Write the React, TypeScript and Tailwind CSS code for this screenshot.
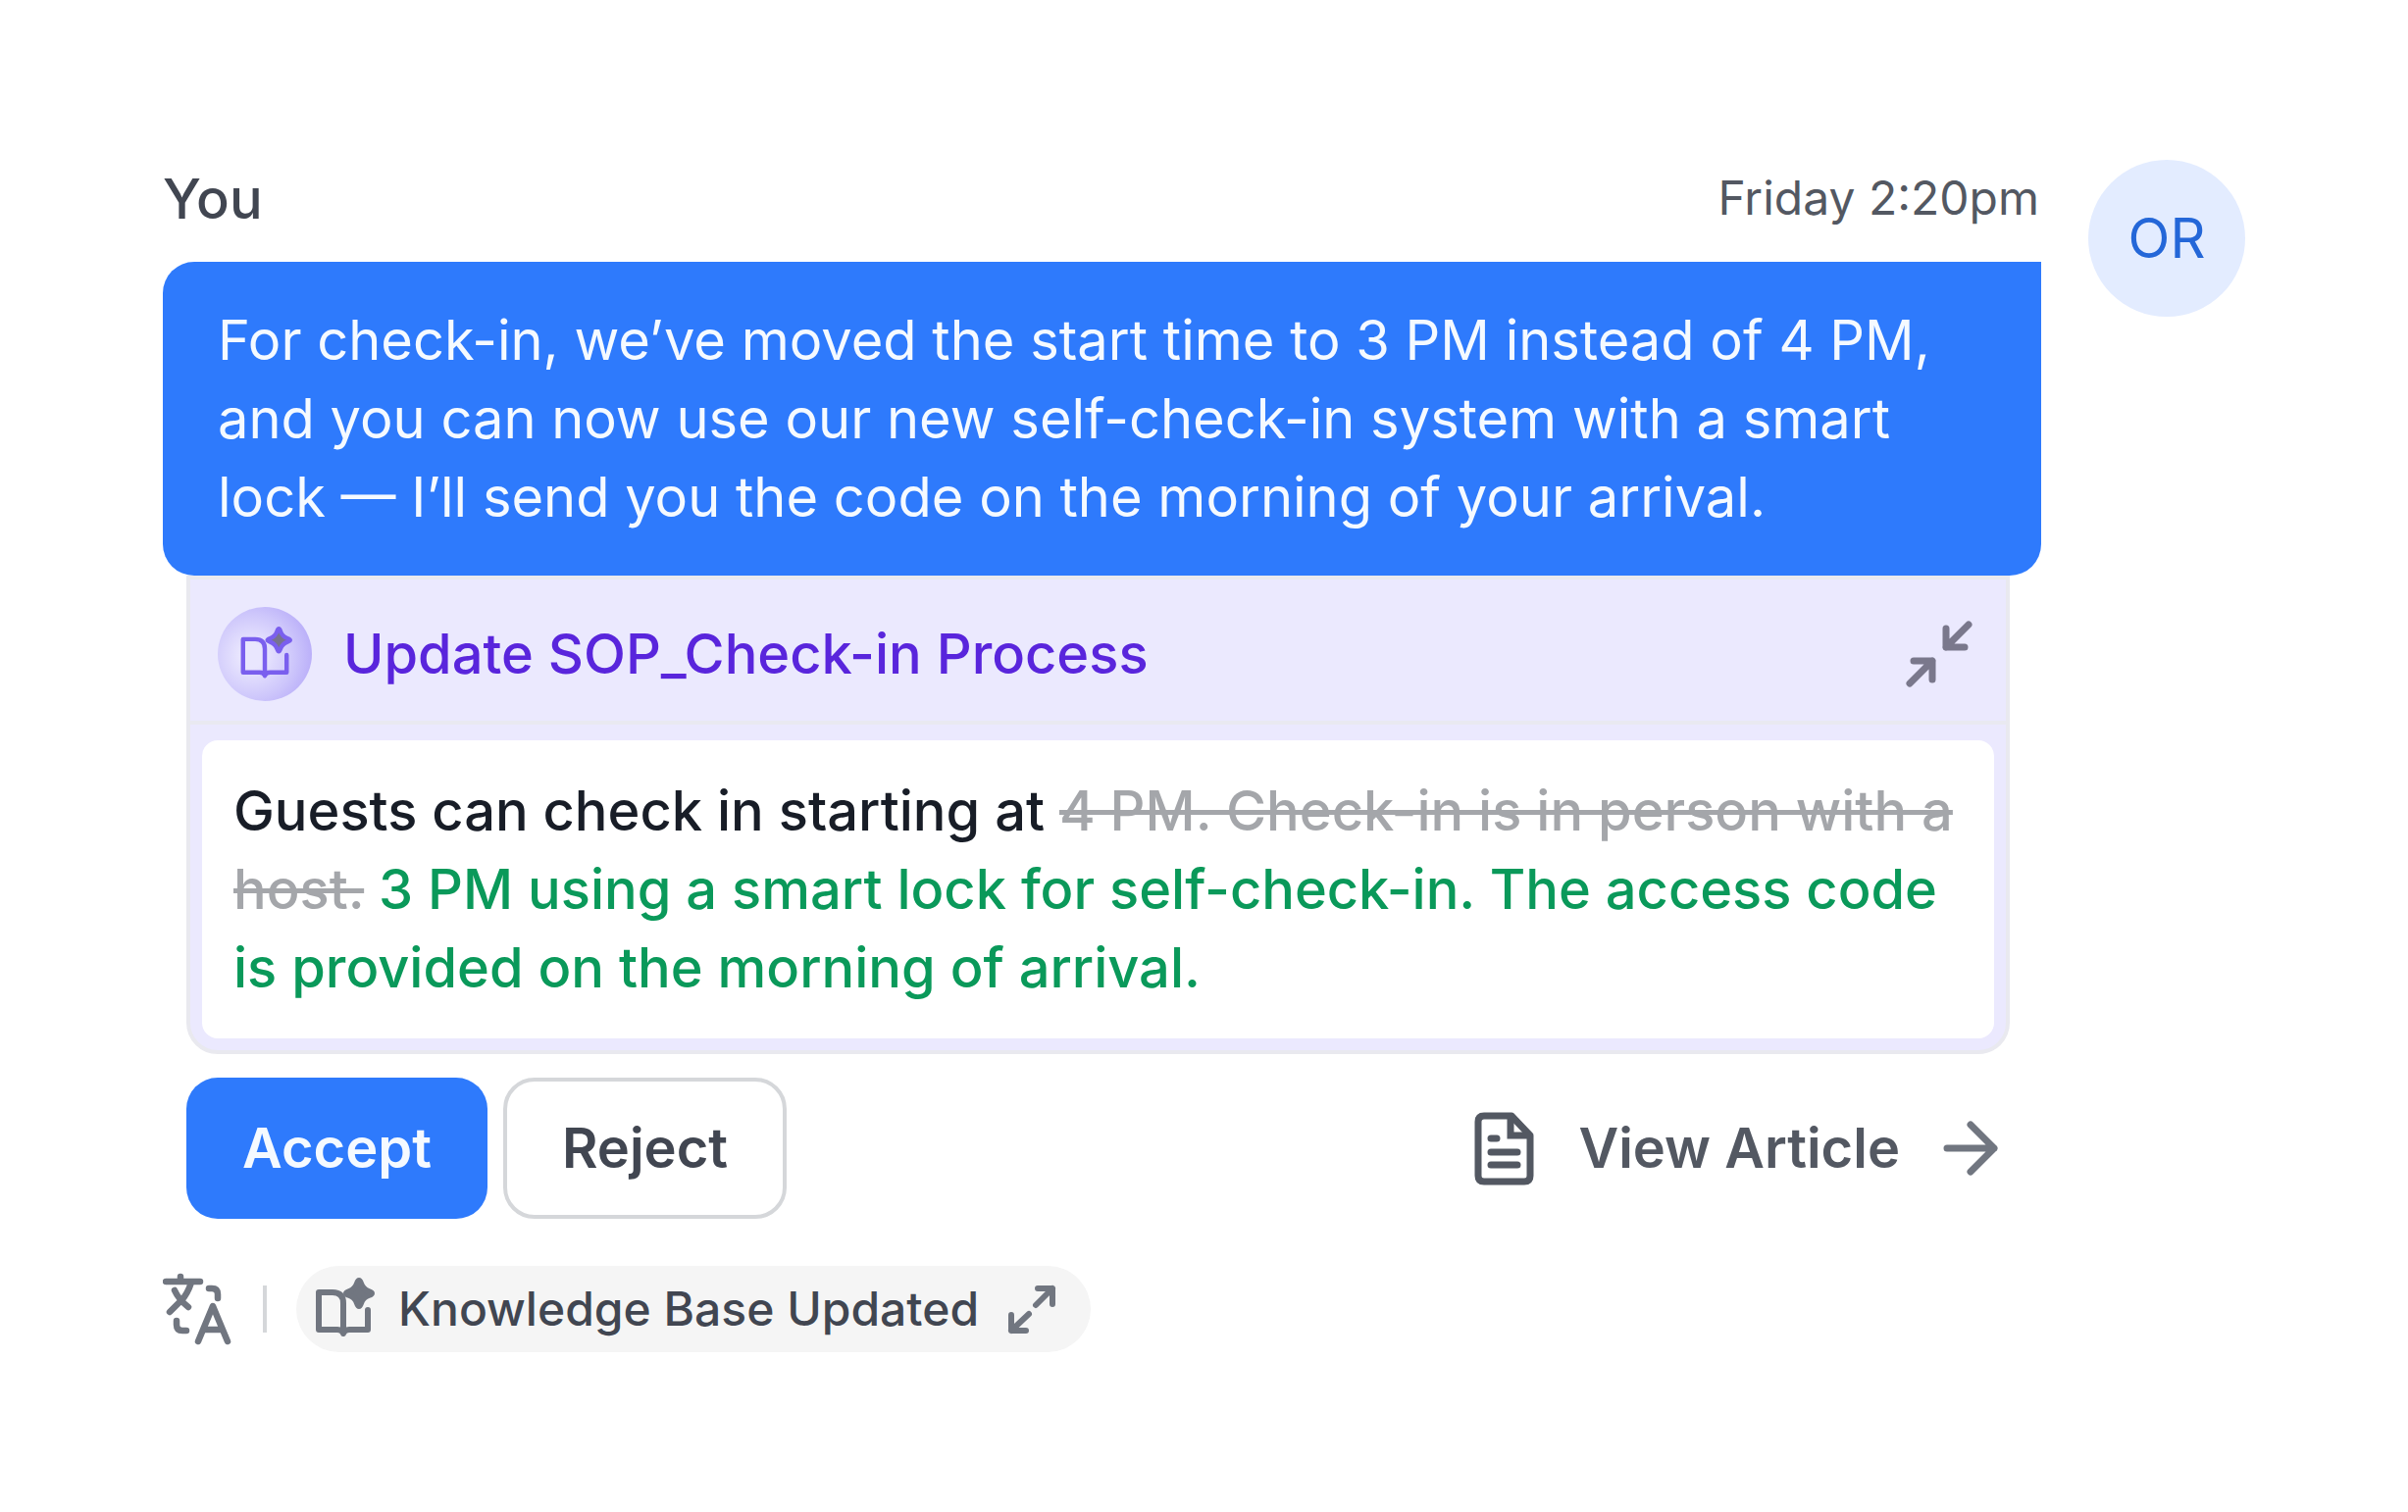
import { JSX, ReactNode } from 'react'

interface IconProps {
  className?: string
}

interface BookSparkleProps extends IconProps {
  strokeWidth?: number
  sparkleFill?: string
}

function BookSparkleIcon({
  className,
  strokeWidth = 6,
  sparkleFill = 'currentColor'
}: BookSparkleProps): JSX.Element {
  return (
    <svg
      viewBox="0 0 72 72"
      fill="none"
      stroke="currentColor"
      strokeWidth={strokeWidth}
      strokeLinecap="round"
      strokeLinejoin="round"
      className={className}
      aria-hidden="true"
    >
      <path d="M36 60V30Q36 19 25 19H11V57H30Q35 57 36 61Q37 57 42 57H61V37" />
      <path
        fill={sparkleFill}
        d="M52 7Q53 7 54 10Q56 16 62 18Q65 19 65 20Q65 21 62 22Q56 24 54 30Q53 33 52 33Q51 33 50 30Q48 24 42 22Q39 21 39 20Q39 19 42 18Q48 16 50 10Q51 7 52 7Z"
      />
    </svg>
  )
}

function CollapseIcon({ className }: IconProps): JSX.Element {
  return (
    <svg
      viewBox="0 0 80 80"
      fill="none"
      stroke="currentColor"
      strokeWidth={7}
      strokeLinecap="round"
      strokeLinejoin="round"
      className={className}
      aria-hidden="true"
    >
      <path d="M70 10L47 33M47 14V33H66M10 70L33 47M14 47H33V66" />
    </svg>
  )
}

function ExpandIcon({ className }: IconProps): JSX.Element {
  return (
    <svg
      viewBox="0 0 56 56"
      fill="none"
      stroke="currentColor"
      strokeWidth={6}
      strokeLinecap="round"
      strokeLinejoin="round"
      className={className}
      aria-hidden="true"
    >
      <path d="M32 24L49 7M34 7H49V23M25 33L7 50M7 34V50H22" />
    </svg>
  )
}

function TranslateIcon({ className }: IconProps): JSX.Element {
  return (
    <svg
      viewBox="0 0 72 80"
      fill="none"
      stroke="currentColor"
      strokeWidth={6.5}
      strokeLinecap="round"
      strokeLinejoin="round"
      className={className}
      aria-hidden="true"
    >
      <path d="M3 12H38M18 7V12M29 13Q25 25 19 31L7 43M12 21Q16 30 26 38" />
      <path d="M47 19H50Q56 19 56 25V29M14 52V56Q14 62 20 62H24" />
      <path d="M36 73L51 37L66 73M42 61H60" />
    </svg>
  )
}

function ArticleIcon({ className }: IconProps): JSX.Element {
  return (
    <svg
      viewBox="0 0 72 80"
      fill="none"
      stroke="currentColor"
      strokeWidth={7}
      strokeLinecap="round"
      strokeLinejoin="round"
      className={className}
      aria-hidden="true"
    >
      <path d="M44 7H16Q10 7 10 13V68Q10 74 16 74H57Q63 74 63 68V27Z" />
      <path d="M43 8V27H62" strokeLinejoin="miter" />
      <path d="M23 30H29M23 44H50M23 57H50" />
    </svg>
  )
}

function ArrowIcon({ className }: IconProps): JSX.Element {
  return (
    <svg
      viewBox="0 0 64 64"
      fill="none"
      stroke="currentColor"
      strokeWidth={7}
      strokeLinecap="round"
      strokeLinejoin="round"
      className={className}
      aria-hidden="true"
    >
      <path d="M8 32H56M32 8L56 32L32 56" />
    </svg>
  )
}

interface SuggestionCardProps {
  title: string
  children: ReactNode
}

function SuggestionCard({ title, children }: SuggestionCardProps): JSX.Element {
  return (
    <section className="mr-8 ml-6 rounded-b-[32px] border-4 border-[#e9e9ef] bg-[#ebe9fe]">
      <header className="flex items-center gap-8 border-b-4 border-[#e9e9f1] pt-7 pr-7 pb-5 pl-7">
        <span className="flex size-24 shrink-0 items-center justify-center rounded-full bg-[radial-gradient(circle_at_36%_52%,#e9e6fe_15%,#cdc6fb_55%,#a99af7_100%)]">
          <BookSparkleIcon className="size-16 text-[#7a5fee]" strokeWidth={5} sparkleFill="#77738f" />
        </span>
        <h2 className="flex-1 text-[56px] leading-[80px] font-medium text-[#5925dc]">{title}</h2>
        <button type="button" aria-label="Collapse" className="text-[#7a788c]">
          <CollapseIcon className="size-20" />
        </button>
      </header>
      <div className="mx-3 mt-4 mb-3 rounded-2xl bg-white p-8 text-[56px] leading-[80px] font-medium">
        {children}
      </div>
    </section>
  )
}

function App(): JSX.Element {
  return (
    <main className="bg-white px-[166px] py-[163px] font-['Inter',sans-serif]">
      <article className="flex items-start gap-12">
        <div className="min-w-0 flex-1">
          <div className="mb-6 flex items-start justify-between">
            <span className="text-[56px] leading-[80px] font-medium text-[#414651]">You</span>
            <time className="pr-0.5 text-5xl leading-[78px] text-[#535862]">Friday 2:20pm</time>
          </div>

          <p className="rounded-[32px] rounded-tr-none bg-[#2e7afc] px-14 py-10 text-[56px] leading-[80px] text-[#f5faff]">
            For check-in, we’ve moved the start time to 3 PM instead of 4 PM,
            <br />
            and you can now use our new self-check-in system with a smart
            <br />
            lock — I’ll send you the code on the morning of your arrival.
          </p>

          <SuggestionCard title="Update SOP_Check-in Process">
            <p className="text-[#181d27]">
              Guests can check in starting at{' '}
              <del className="text-[#a4a6aa]">
                4 PM. Check-in is in person with a
                <br />
                host.
              </del>{' '}
              <ins className="text-[#0a995a] no-underline">
                3 PM using a smart lock for self-check-in. The access code
                <br />
                is provided on the morning of arrival.
              </ins>
            </p>
          </SuggestionCard>

          <div className="mt-6 mr-8 ml-6 flex items-center justify-between">
            <div className="flex gap-4 text-[56px] leading-[80px] font-semibold">
              <button
                type="button"
                className="rounded-[32px] bg-[#2e7afc] px-[57px] py-8 text-[#f5faff]"
              >
                Accept
              </button>
              <button
                type="button"
                className="rounded-[32px] border-4 border-[#d5d7da] bg-white px-14 py-7 text-[#414651]"
              >
                Reject
              </button>
            </div>
            <a
              href="#article"
              className="flex items-center gap-10 pr-2 text-[56px] leading-[80px] font-semibold text-[#535862]"
            >
              <ArticleIcon className="h-20 w-18" />
              View Article
              <ArrowIcon className="size-16 text-[#717680]" />
            </a>
          </div>

          <footer className="mt-12 flex items-center gap-[30px]">
            <button type="button" aria-label="Translate" className="text-[#717680]">
              <TranslateIcon className="h-20 w-18" />
            </button>
            <span className="h-12 w-1 bg-[#d5d7da]" />
            <button
              type="button"
              className="flex items-center gap-5 rounded-full bg-[#f5f5f5] py-2 pr-8 pl-3 text-5xl leading-[72px] font-medium text-[#414651]"
            >
              <BookSparkleIcon className="size-18 text-[#717680]" />
              Knowledge Base Updated
              <ExpandIcon className="ml-1.5 size-14 text-[#717680]" />
            </button>
          </footer>
        </div>

        <span className="flex size-40 shrink-0 items-center justify-center rounded-full bg-[#e3ecff] text-[56px] leading-[80px] text-[#2467d8]">
          OR
        </span>
      </article>
    </main>
  )
}

export default App
